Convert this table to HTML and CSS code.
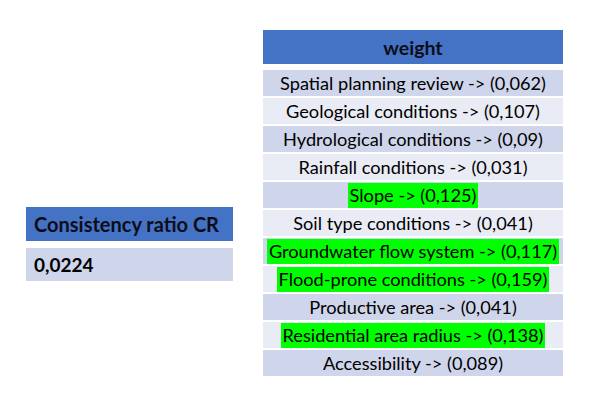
FILE: index.html
```html
<!DOCTYPE html>
<html>
<head>
<meta charset="utf-8">
<link rel="stylesheet" href="styles.css">
</head>
<body>
<div class="page">
  <div class="cr-table">
    <div class="cr-head">Consistency ratio CR</div>
    <div class="cr-value">0,0224</div>
  </div>
  <div class="w-table">
    <div class="w-head">weight</div>
    <div class="w-row dark"><span>Spatial planning review -&gt; (0,062)</span></div>
    <div class="w-row light"><span>Geological conditions -&gt; (0,107)</span></div>
    <div class="w-row dark"><span>Hydrological conditions -&gt; (0,09)</span></div>
    <div class="w-row light"><span>Rainfall conditions -&gt; (0,031)</span></div>
    <div class="w-row dark"><span class="hl">Slope -&gt; (0,125)</span></div>
    <div class="w-row light"><span>Soil type conditions -&gt; (0,041)</span></div>
    <div class="w-row dark"><span class="hl">Groundwater flow system -&gt; (0,117)</span></div>
    <div class="w-row light"><span class="hl">Flood-prone conditions -&gt; (0,159)</span></div>
    <div class="w-row dark"><span>Productive area -&gt; (0,041)</span></div>
    <div class="w-row light"><span class="hl">Residential area radius -&gt; (0,138)</span></div>
    <div class="w-row dark"><span>Accessibility -&gt; (0,089)</span></div>
  </div>
</div>
</body>
</html>
```
FILE: styles.css
```css
html, body {
  margin: 0;
  padding: 0;
  background: #ffffff;
}
body {
  font-family: Lato, "Open Sans", sans-serif;
  color: #000000;
}
.page {
  display: flex;
  align-items: flex-start;
  padding: 30px 0 0 26px;
  gap: 30px;
}
.cr-table {
  margin-top: 177px;
  width: 207px;
  display: flex;
  flex-direction: column;
  gap: 7px;
}
.cr-head {
  height: 34px;
  background: #4472c4;
  font-weight: bold;
  font-size: 20px;
  display: flex;
  align-items: center;
  padding-left: 8px;
  color: #0d0d1a;
}
.cr-value {
  height: 33px;
  background: #cfd5ea;
  font-weight: bold;
  font-size: 19px;
  display: flex;
  align-items: center;
  padding-left: 8px;
}
.w-table {
  width: 300px;
  display: flex;
  flex-direction: column;
  gap: 2px;
}
.w-head {
  height: 34px;
  background: #4472c4;
  font-weight: bold;
  font-size: 19.5px;
  display: flex;
  align-items: center;
  justify-content: center;
  margin-bottom: 4px;
  color: #0d0d1a;
}
.w-row {
  height: 26px;
  display: flex;
  align-items: center;
  justify-content: center;
  font-size: 18.2px;
}
.w-row span {
  line-height: 25px;
  padding: 0 2px;
}
.dark { background: #cfd5ea; }
.light { background: #e9ebf5; }
.hl { background: #00ff00; }
```
